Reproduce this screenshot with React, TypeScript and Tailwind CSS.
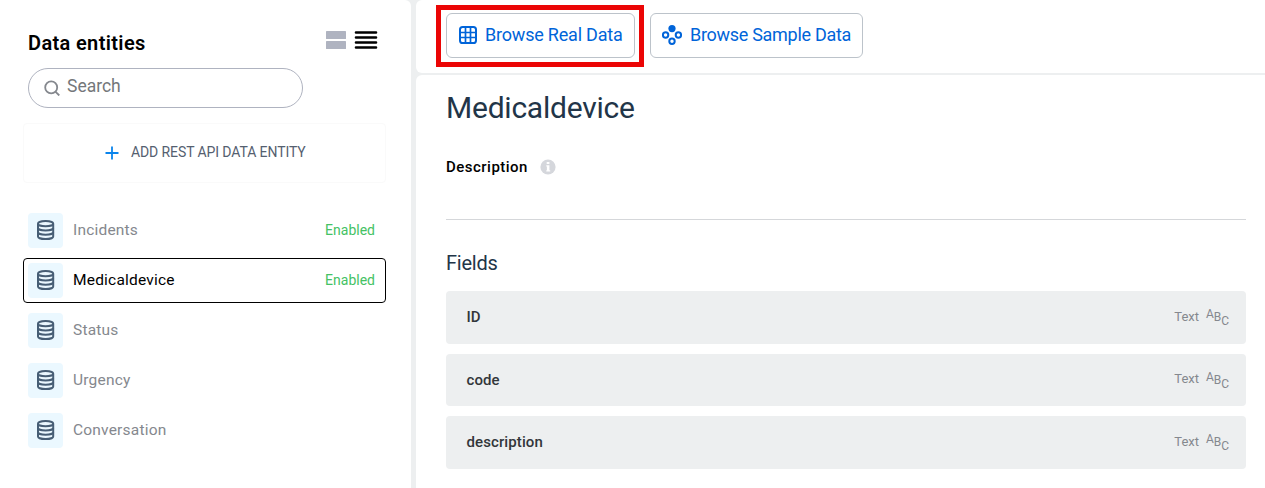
const entities = [
  { name: "Incidents", enabled: true },
  { name: "Medicaldevice", enabled: true, selected: true },
  { name: "Status" },
  { name: "Urgency" },
  { name: "Conversation" },
];

const fields = ["ID", "code", "description"];

function DatabaseIcon() {
  return (
    <svg width="18" height="20" viewBox="0 0 18 20" fill="none" stroke="#475e75" strokeWidth="2">
      <ellipse cx="8.6" cy="3.7" rx="7.6" ry="2.6" />
      <path d="M1 3.7v12.7c0 1.5 3.4 2.6 7.6 2.6s7.6-1.1 7.6-2.6V3.7" />
      <path d="M1 8c0 1.4 3.4 2.5 7.6 2.5s7.6-1.1 7.6-2.5M1 12.2c0 1.4 3.4 2.5 7.6 2.5s7.6-1.1 7.6-2.5" />
    </svg>
  );
}

function GridIcon() {
  return (
    <svg width="18" height="18" viewBox="0 0 18 18" fill="none" stroke="#0064d9">
      <rect x="1" y="1" width="16" height="16" rx="2.6" strokeWidth="2" />
      <path d="M6.5 1v16M11.5 1v16M1 6.5h16M1 11.5h16" strokeWidth="1.7" />
    </svg>
  );
}

function SampleIcon() {
  return (
    <svg width="20" height="20" viewBox="0 0 20 20" fill="none" stroke="#0064d9" strokeWidth="2">
      <circle cx="10" cy="3.6" r="3.6" fill="#0064d9" stroke="none" />
      <circle cx="3.6" cy="10" r="2.7" />
      <circle cx="16.4" cy="10" r="2.7" />
      <circle cx="10" cy="16.3" r="2.7" />
    </svg>
  );
}

export default function App() {
  return (
    <div className="flex h-[488px] w-[1265px] gap-[5px] overflow-hidden bg-[#edeff0] font-['Roboto','Liberation_Sans',sans-serif]">
      <aside className="flex w-[411px] shrink-0 flex-col rounded-tr-md bg-white pr-[25px] pl-[23px]">
        <header className="mt-[26px] flex h-[34px] justify-between pr-2 pl-[5px]">
          <h1 className="text-[20px] leading-[34px] font-semibold tracking-[0.36px] whitespace-nowrap text-black">Data entities</h1>
          <div className="flex gap-2 pt-[5px]">
            <svg width="20" height="18" viewBox="0 0 20 18" fill="#afb3c0">
              <rect width="20" height="8" rx="0.6" />
              <rect y="10" width="20" height="8" rx="0.6" />
            </svg>
            <svg width="24" height="18" viewBox="0 0 24 18" stroke="#000" strokeLinecap="round">
              <path d="M2 1.5h20M2 6.5h20M2 11.5h20M2 16.5h20" strokeWidth="2.6" />
            </svg>
          </div>
        </header>
        <div className="mt-2 ml-[5px] flex h-10 w-[275px] items-start rounded-full border border-[#afb3c0] pl-[15px]">
          <svg className="mt-[11px]" width="16" height="16" viewBox="0 0 16 16" fill="none" stroke="#85888e" strokeWidth="1.8">
            <circle cx="7.2" cy="7.4" r="6" />
            <path d="m11.4 11.6 3.9 3.9" />
          </svg>
          <span className="ml-[7px] text-[17.5px] leading-[34px] text-[#74777a]">Search</span>
        </div>
        <button className="mt-[15px] flex h-[60px] shrink-0 items-center rounded border border-[#fafafa] pb-px pl-[81px]">
          <svg width="14" height="14" viewBox="0 0 14 14" stroke="#0a84ec" strokeWidth="1.8">
            <path d="M7 0.5v13M0.5 7h13" />
          </svg>
          <span className="ml-3 text-[14px] tracking-[-0.1px] whitespace-nowrap text-[#556070]">ADD REST API DATA ENTITY</span>
        </button>
        <ul className="mt-[25px] flex flex-col gap-[5px]">
          {entities.map((e) => (
            <li
              key={e.name}
              className={`flex h-[45px] items-center rounded border pr-[10px] pl-1 ${e.selected ? "border-black text-black" : "border-transparent text-[#85888e]"}`}
            >
              <span className="flex size-[35px] items-start justify-start rounded bg-[#ebf8ff] pt-[7px] pl-[9px]">
                <DatabaseIcon />
              </span>
              <span className="ml-[10px] pt-px text-[15.5px] tracking-[0.2px]">{e.name}</span>
              {e.enabled && <span className="ml-auto text-[14px] text-[#44c264]">Enabled</span>}
            </li>
          ))}
        </ul>
      </aside>
      <main className="flex min-w-0 flex-1 flex-col gap-[2px]">
        <div className="flex h-[73px] shrink-0 gap-[6px] rounded-l-md bg-white pt-[5px] pl-[20px]">
          <div className="h-[62px] w-[208px] border-[5px] border-[#eb0505] p-[3px] pl-[5px]">
            <button className="flex h-[45px] w-[189px] items-center rounded-md border border-[#bcc3ca] pl-3 text-[18px] tracking-[-0.2px] whitespace-nowrap text-[#0064d9]">
              <span className="pb-[2px]"><GridIcon /></span>
              <span className="ml-2 pb-[2px]">Browse Real Data</span>
            </button>
          </div>
          <button className="mt-2 flex h-[45px] w-[213px] items-center rounded-md border border-[#bcc3ca] pl-[11px] text-[18px] tracking-[-0.29px] whitespace-nowrap text-[#0064d9]">
            <span className="pb-[2px]"><SampleIcon /></span>
            <span className="ml-2 pb-[2px]">Browse Sample Data</span>
          </button>
        </div>
        <section className="flex-1 rounded-tl-md bg-white pr-[19px] pl-[30px]">
          <h2 className="pt-[15px] text-[30px] leading-9 tracking-[-0.23px] text-[#223548]">Medicaldevice</h2>
          <div className="mt-[31px] flex h-5 items-center">
            <h3 className="w-[94px] text-[15px] leading-5 font-medium tracking-[0.48px] text-black">Description</h3>
            <svg width="16" height="16" viewBox="0 0 16 16">
              <circle cx="8" cy="8" r="7.6" fill="#d5d7dc" />
              <path d="M6.7 3.1h2.7v2H6.7zM6.3 6.2h3.1v5.1h.8v1.3H6.3v-1.3h.6V7.5h-.6z" fill="#fff" />
            </svg>
          </div>
          <div className="mt-[42px] border-t border-[#d5d7da]" />
          <h2 className="mt-[31px] text-[20px] leading-6 tracking-[-0.25px] text-[#223548]">Fields</h2>
          <ul className="mt-4 flex flex-col gap-[10px]">
            {fields.map((f) => (
              <li key={f} className="flex h-[52.5px] items-center rounded bg-[#edeff0] pr-[17px] pl-[20.5px]">
                <span className="text-[15px] font-medium tracking-[0.1px] text-[#32363a]">{f}</span>
                <span className="ml-auto pb-[2px] text-[13px] text-[#85888e]">Text</span>
                <span className="ml-[7px] flex h-5 w-[23px] pt-px text-[12px] leading-3 text-[#85888e]">
                  <span className="w-2">A</span>
                  <span className="w-2 pt-[3px]">B</span>
                  <span className="w-2 pt-[7px]">C</span>
                </span>
              </li>
            ))}
          </ul>
        </section>
      </main>
    </div>
  );
}
